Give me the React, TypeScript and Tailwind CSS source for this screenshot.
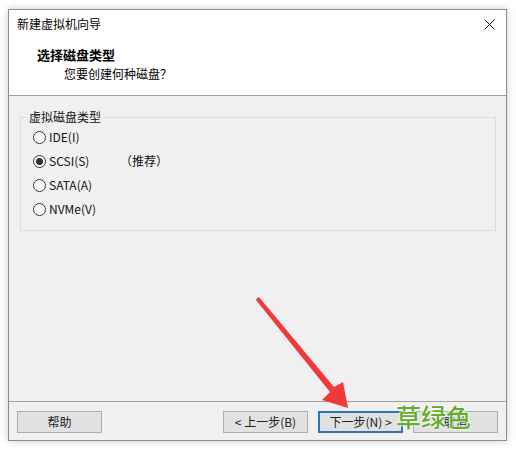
const FONT = { fontFamily: '"Noto Sans CJK SC", "Liberation Sans", sans-serif' };

function Radio({ checked, label, note }: { checked?: boolean; label: string; note?: string }) {
  return (
    <div className="flex h-[24px] items-center pl-[12px]">
      <span className="flex h-[13px] w-[13px] items-center justify-center rounded-full border border-[#333] bg-white">
        {checked && <span className="h-[7px] w-[7px] rounded-full bg-[#333]" />}
      </span>
      <span className="ml-[3px] inline-block w-[71px] text-[12px] text-[#111]">{label}</span>
      {note && <span className="text-[12px] text-[#111]">{note}</span>}
    </div>
  );
}

function Btn({ children, focused }: { children: React.ReactNode; focused?: boolean }) {
  return (
    <button
      className={`flex h-[22px] w-[85px] items-center justify-center bg-[#e1e1e1] text-[12px] text-[#222] ${
        focused ? 'border-2 border-[#2f75b5]' : 'border border-[#adadad]'
      }`}
    >
      {children}
    </button>
  );
}

export default function App() {
  return (
    <div className="relative h-[450px] w-[516px] overflow-hidden bg-white pl-[8px] pt-[9px]" style={FONT}>
      <div className="flex h-[432px] w-[499px] flex-col border border-[#8c8c8c] shadow-[0_0_8px_rgba(0,0,0,0.2)]">
        {/* header */}
        <div className="h-[86px] border-b border-[#a0a0a0] bg-white">
          <div className="flex h-[28px] items-center justify-between pl-[8px] pr-[11px]">
            <span className="text-[12px] text-black">新建虚拟机向导</span>
            <svg width="11" height="11" viewBox="0 0 11 11">
              <path d="M0.5 0.5 L10.5 10.5 M10.5 0.5 L0.5 10.5" stroke="#111" strokeWidth="1" />
            </svg>
          </div>
          <div className="mt-[9px] pl-[28px] text-[13px] font-bold leading-[16px] text-black">选择磁盘类型</div>
          <div className="mt-[3px] pl-[55px] text-[12px] leading-[16px] text-black">您要创建何种磁盘？</div>
        </div>

        {/* body */}
        <div className="flex-1 bg-[#f0f0f0] px-[11px] pt-[13px]">
          <fieldset className="h-[122px] w-[476px] border border-[#dcdcdc] pb-[4px]">
            <legend className="ml-[6px] px-[2px] text-[12px] leading-[16px] text-[#111]">虚拟磁盘类型</legend>
            <Radio label="IDE(I)" />
            <Radio checked label="SCSI(S)" note="（推荐）" />
            <Radio label="SATA(A)" />
            <Radio label="NVMe(V)" />
          </fieldset>
        </div>

        {/* footer */}
        <div className="flex h-[39px] items-start justify-between border-t border-[#a0a0a0] bg-[#f0f0f0] px-[8px] pt-[9px]">
          <Btn>帮助</Btn>
          <div className="flex gap-[10px]">
            <Btn>&lt; 上一步(B)</Btn>
            <Btn focused>下一步(N) &gt;</Btn>
            <Btn>取消</Btn>
          </div>
        </div>
      </div>

      {/* red annotation arrow */}
      <svg className="absolute left-[250px] top-[290px]" width="110" height="125" viewBox="0 0 110 125">
        <polygon points="7,8 9,7 84,97 93,92 98,118 72,110 80,102 6,10" fill="#f03a3a" />
      </svg>

      {/* watermark */}
      <span
        className="absolute left-[396px] top-[401px] text-[25px] font-medium leading-[30px] text-[#65ad2c]"
        style={{ textShadow: '0 0 2px #fff, 0 0 2px #fff, 0 0 2px #fff' }}
      >
        草绿色
      </span>
    </div>
  );
}
